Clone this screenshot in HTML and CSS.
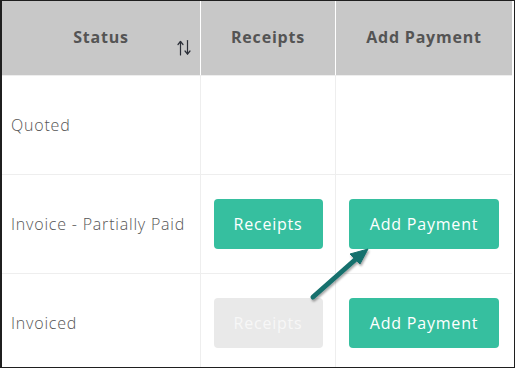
FILE: index.html
```html
<!DOCTYPE html>
<html>
<head>
  <title>Invoices</title>
  <link rel="stylesheet" href="styles.css">
</head>
<body>
  <div class="frame">
    <table class="grid">
      <thead>
        <tr>
          <th class="col-status">
            Status
            <svg class="sort" width="16" height="18" viewBox="0 0 16 18">
              <g fill="none" stroke="#2b2f38" stroke-width="1.2" stroke-linecap="round" stroke-linejoin="round">
                <path d="M4.5 2.5 V16"/>
                <path d="M2 5.5 L4.5 2.5 L7 5.5"/>
                <path d="M11.5 1.5 V15"/>
                <path d="M9 12 L11.5 15 L14 12"/>
              </g>
            </svg>
          </th>
          <th class="col-receipts">Receipts</th>
          <th class="col-pay">Add Payment</th>
        </tr>
      </thead>
      <tbody>
        <tr>
          <td class="status">Quoted</td>
          <td></td>
          <td></td>
        </tr>
        <tr>
          <td class="status">Invoice - Partially Paid</td>
          <td><button class="btn btn-receipts">Receipts</button></td>
          <td><button class="btn btn-pay">Add Payment</button></td>
        </tr>
        <tr>
          <td class="status">Invoiced</td>
          <td><button class="btn btn-receipts" disabled>Receipts</button></td>
          <td><button class="btn btn-pay">Add Payment</button></td>
        </tr>
      </tbody>
    </table>

    <!-- callout arrow pointing at the button -->
    <svg class="callout" width="515" height="368" viewBox="0 0 515 368">
      <defs>
        <filter id="shadow" x="-20%" y="-20%" width="140%" height="140%">
          <feDropShadow dx="1" dy="2" stdDeviation="1.2" flood-color="#000" flood-opacity="0.35"/>
        </filter>
      </defs>
      <g filter="url(#shadow)" fill="#17706d" stroke="#17706d">
        <line x1="313" y1="297" x2="356" y2="259" stroke-width="5" stroke-linecap="round"/>
        <polygon points="368,249 350,254 360,264" stroke-width="1" stroke-linejoin="round"/>
      </g>
    </svg>
  </div>
</body>
</html>
```
FILE: styles.css
```css
html, body {
    margin: 0;
    padding: 0;
    background: #fff;
}

.frame {
    position: relative;
    width: 515px;
    height: 368px;
    box-sizing: border-box;
    border: 1px solid #1f1f1f;
    border-left-width: 2px;
    overflow: hidden;
    font-family: "Open Sans", "DejaVu Sans", sans-serif;
    letter-spacing: 0.8px;
}

.grid {
    width: 508px;
    border-collapse: collapse;
    table-layout: fixed;
}

.grid th {
    height: 71px;
    padding: 0 0 3px;
    background: #c8c8c8;
    color: #545454;
    font-size: 16px;
    font-weight: 700;
    text-align: center;
    border-left: 1px solid #fff;
    border-bottom: 1px solid #eeeeee;
    position: relative;
}

.grid th:first-child {
    border-left: none;
}

.col-status { width: 198px; }
.col-receipts { width: 134px; }
.col-pay { width: 176px; }

.sort {
    position: absolute;
    left: 174px;
    top: 38px;
}

.grid td {
    height: 98px;
    padding: 0;
    border-top: 1px solid #eeeeee;
    border-left: 1px solid #eeeeee;
    text-align: center;
    vertical-align: middle;
}

.grid td:first-child {
    border-left: none;
}

.grid td.status {
    text-align: left;
    padding-left: 9px;
    font-size: 16px;
    font-weight: 300;
    color: #555;
}

.btn {
    height: 50px;
    border: none;
    border-radius: 4px;
    background: #36bf9f;
    color: #fff;
    font-family: inherit;
    font-size: 16px;
    font-weight: 400;
    letter-spacing: 0.8px;
    padding: 0;
}

.btn-receipts {
    width: 109px;
}

.btn-pay {
    width: 150px;
}

.btn[disabled] {
    background: #e9e9e9;
    color: #f7f7f7;
}

.callout {
    position: absolute;
    left: -2px;
    top: -1px;
    pointer-events: none;
}
```
